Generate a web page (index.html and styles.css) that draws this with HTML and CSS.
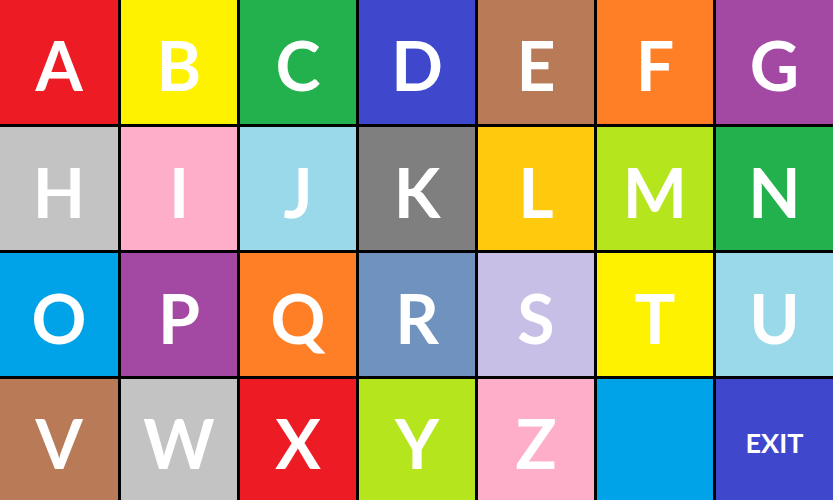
FILE: index.html
```html
<!DOCTYPE html>
<html>
<head>
<meta charset="utf-8">
<link rel="stylesheet" href="styles.css">
</head>
<body>
<div class="board">
  <div class="key red">A</div>
  <div class="key yellow">B</div>
  <div class="key green">C</div>
  <div class="key indigo">D</div>
  <div class="key brown">E</div>
  <div class="key orange">F</div>
  <div class="key purple">G</div>
  <div class="key gray">H</div>
  <div class="key pink">I</div>
  <div class="key sky">J</div>
  <div class="key dark">K</div>
  <div class="key gold">L</div>
  <div class="key lime">M</div>
  <div class="key green">N</div>
  <div class="key blue">O</div>
  <div class="key purple">P</div>
  <div class="key orange">Q</div>
  <div class="key steel">R</div>
  <div class="key lavender">S</div>
  <div class="key yellow">T</div>
  <div class="key sky">U</div>
  <div class="key brown">V</div>
  <div class="key gray">W</div>
  <div class="key red">X</div>
  <div class="key lime">Y</div>
  <div class="key pink">Z</div>
  <div class="key blue"></div>
  <div class="key indigo exit">EXIT</div>
</div>
</body>
</html>
```
FILE: styles.css
```css
html, body {
  margin: 0;
  padding: 0;
  background: #000;
}
.board {
  width: 833px;
  height: 500px;
  display: grid;
  grid-template-columns: 118px repeat(5, 116px) 1fr;
  grid-template-rows: 124px 123px 123px 1fr;
  gap: 3px;
  background: #000;
}
.key {
  display: flex;
  align-items: center;
  justify-content: center;
  color: #fff;
  font-family: "Lato", "Liberation Sans", sans-serif;
  font-weight: 700;
  font-size: 68px;
  line-height: 1;
  padding-top: 6px;
}
.exit {
  font-size: 27px;
}
.red { background: #ed1c24; }
.yellow { background: #fff200; }
.green { background: #22b14c; }
.indigo { background: #3f48cc; }
.brown { background: #b97a57; }
.orange { background: #ff7f27; }
.purple { background: #a349a4; }
.gray { background: #c3c3c3; }
.pink { background: #ffaec9; }
.sky { background: #99d9ea; }
.dark { background: #7f7f7f; }
.gold { background: #ffc90e; }
.lime { background: #b5e61d; }
.blue { background: #00a2e8; }
.steel { background: #7092be; }
.lavender { background: #c8bfe7; }
```
